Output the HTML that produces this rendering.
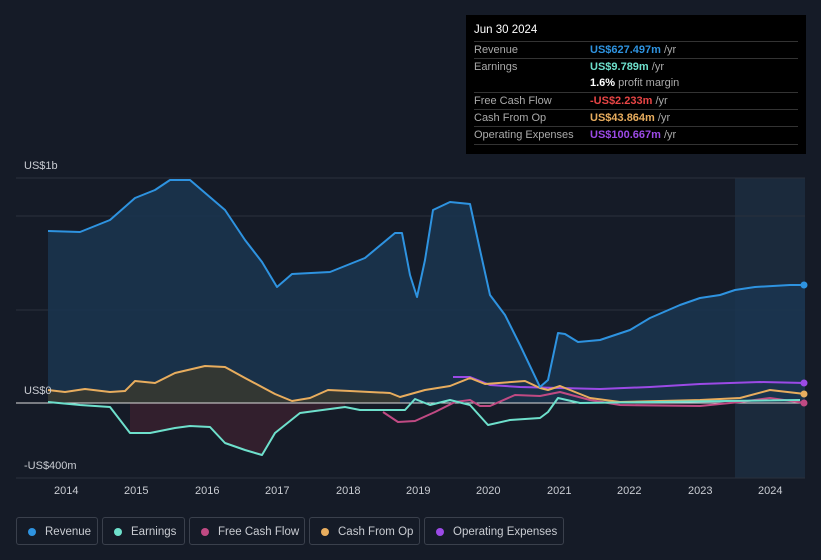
<!DOCTYPE html><html><head><style>
body{margin:0;width:821px;height:560px;background:#151b27;font-family:"Liberation Sans",sans-serif;overflow:hidden;position:relative}
.tt{position:absolute;left:466px;top:15px;width:340px;height:139px;background:#000;font-size:11px;color:#aaa}
.tt .d{position:absolute;left:8px;top:9px;color:#fff;font-size:11.5px}
.r{position:absolute;left:8px;width:324px;height:17px;border-top:1px solid #333;line-height:17px}
.r span{position:absolute;left:116px;font-weight:bold}
.r i{font-style:normal;color:#aaa;font-weight:normal}
.lg{position:absolute;top:517px;height:28px;border:1px solid #3a404c;border-radius:3px;color:#c9ccd2;font-size:11.5px;line-height:28px;box-sizing:border-box}
.lg b{position:absolute;left:11px;top:10px;width:8px;height:8px;border-radius:50%}
.lg span{position:absolute;left:28px}
.ax{position:absolute;color:#c9ccd2;font-size:11px}
</style></head><body>
<svg width="821" height="560" style="position:absolute;left:0;top:0">
<rect x="735" y="178" width="70" height="300" fill="#1b2a3c"/>
<g stroke="#2a303c" stroke-width="1"><line x1="16" y1="178" x2="805" y2="178"/><line x1="16" y1="216" x2="805" y2="216"/><line x1="16" y1="310" x2="805" y2="310"/><line x1="16" y1="478" x2="805" y2="478"/></g>
<path d="M48,231 L80,232 110,220 135,198 155,190 170,180 190,180 225,210 245,240 262,262 277,287 292,274 330,272 365,258 395,233 402,233 410,275 417,297 425,260 433,210 450,202 470,204 480,250 490,295 505,315 520,345 540,387 548,380 558,333 565,334 578,342 600,340 630,330 650,318 680,305 700,298 720,295 735,290 755,287 790,285 805,285 L805,403 L48,403Z" fill="#1a3550" opacity="0.85"/>
<path d="M48,390 65,392 85,389 110,392 125,391 135,381 155,383 175,373 205,366 225,367 245,378 275,394 292,401 310,398 328,390 350,391 390,393 400,397 L400,403 L48,403Z" fill="#3a3a2e" opacity="0.8"/>
<path d="M130,403 L130,433 150,433 175,428 190,426 210,427 225,443 245,450 262,455 275,433 300,413 345,407 L345,403Z" fill="#3a2030" opacity="0.8"/>
<line x1="16" y1="403" x2="805" y2="403" stroke="#ddd" stroke-width="1"/>
<g fill="none" stroke-width="2" stroke-linejoin="round">
<path d="M453,377 470,377 490,385 520,387 560,388 600,389 650,387 700,384 760,382 805,383" stroke="#9b4ae6"/>
<path d="M383,412 398,422 415,421 435,412 455,402 470,400 480,406 490,406 515,395 540,396 560,392 590,400 620,405 700,406 740,402 770,398 805,403" stroke="#c04a83"/>
<path d="M48,390 65,392 85,389 110,392 125,391 135,381 155,383 175,373 205,366 225,367 245,378 275,394 292,401 310,398 328,390 350,391 390,393 400,397 425,390 450,386 470,378 485,384 525,381 540,388 548,390 560,386 590,398 620,402 700,400 740,398 770,390 805,394" stroke="#e8ad5e"/>
<path d="M48,402 80,405 110,407 130,433 150,433 175,428 190,426 210,427 225,443 245,450 262,455 275,433 300,413 345,407 360,410 405,410 415,399 430,405 450,400 470,405 488,425 510,420 540,418 548,412 558,398 580,403 800,400" stroke="#6ee0cc"/>
<path d="M48,231 80,232 110,220 135,198 155,190 170,180 190,180 225,210 245,240 262,262 277,287 292,274 330,272 365,258 395,233 402,233 410,275 417,297 425,260 433,210 450,202 470,204 480,250 490,295 505,315 520,345 540,387 548,380 558,333 565,334 578,342 600,340 630,330 650,318 680,305 700,298 720,295 735,290 755,287 790,285 805,285" stroke="#2e93e0"/>
</g>
<circle cx="804" cy="285" r="3.5" fill="#2e93e0"/><circle cx="804" cy="383" r="3.5" fill="#9b4ae6"/><circle cx="804" cy="394" r="3.5" fill="#e8ad5e"/><circle cx="804" cy="403" r="3.5" fill="#c04a83"/>
</svg>
<div class="ax" style="left:24px;top:160px">US$1b</div>
<div class="ax" style="left:24px;top:385px">US$0</div>
<div class="ax" style="left:24px;top:460px">-US$400m</div>
<div class="ax" style="left:54px;top:485px">2014</div><div class="ax" style="left:124px;top:485px">2015</div><div class="ax" style="left:195px;top:485px">2016</div><div class="ax" style="left:265px;top:485px">2017</div><div class="ax" style="left:336px;top:485px">2018</div><div class="ax" style="left:406px;top:485px">2019</div><div class="ax" style="left:476px;top:485px">2020</div><div class="ax" style="left:547px;top:485px">2021</div><div class="ax" style="left:617px;top:485px">2022</div><div class="ax" style="left:688px;top:485px">2023</div><div class="ax" style="left:758px;top:485px">2024</div>
<div class="tt"><div class="d">Jun 30 2024</div>
<div class="r" style="top:26px">Revenue<span style="color:#2e93e0">US$627.497m <i>/yr</i></span></div>
<div class="r" style="top:43px">Earnings<span style="color:#6ee0cc">US$9.789m <i>/yr</i></span></div>
<div class="r" style="top:60px;border-top:none"><span style="color:#fff">1.6% <i>profit margin</i></span></div>
<div class="r" style="top:77px">Free Cash Flow<span style="color:#e84545">-US$2.233m <i>/yr</i></span></div>
<div class="r" style="top:94px">Cash From Op<span style="color:#e8ad5e">US$43.864m <i>/yr</i></span></div>
<div class="r" style="top:111px;border-bottom:1px solid #333">Operating Expenses<span style="color:#9b4ae6">US$100.667m <i>/yr</i></span></div>
</div>
<div class="lg" style="left:16px;width:82px"><b style="background:#2e93e0"></b><span>Revenue</span></div>
<div class="lg" style="left:102px;width:83px"><b style="background:#6ee0cc"></b><span>Earnings</span></div>
<div class="lg" style="left:189px;width:116px"><b style="background:#c04a83"></b><span>Free Cash Flow</span></div>
<div class="lg" style="left:309px;width:111px"><b style="background:#e8ad5e"></b><span>Cash From Op</span></div>
<div class="lg" style="left:424px;width:140px"><b style="background:#9b4ae6"></b><span>Operating Expenses</span></div>
</body></html>
